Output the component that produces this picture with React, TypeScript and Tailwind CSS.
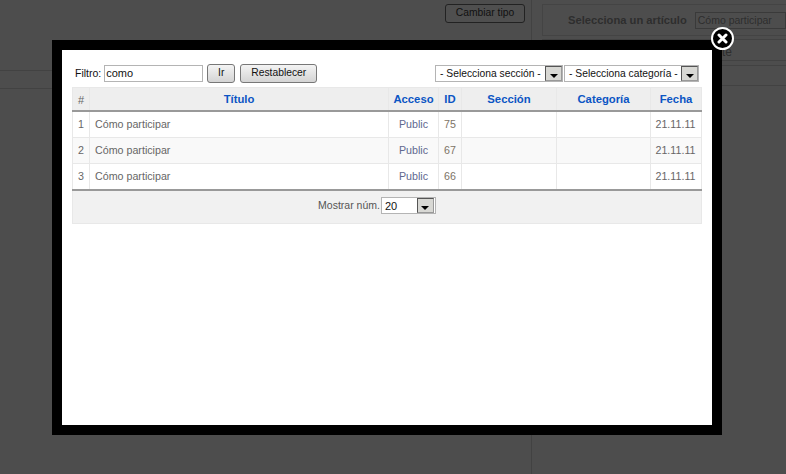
import React from 'react';

const rows = [
  { n: 1, id: 75 },
  { n: 2, id: 67 },
  { n: 3, id: 66 },
];

const SelectArrow = () => (
  <span className="flex h-[15px] w-[17px] flex-none items-center justify-center border border-[#555] border-b-[#999] border-r-[#999] bg-[#d8d8d4]">
    <svg width="8" height="4" viewBox="0 0 8 4" className="mt-[4px]">
      <path d="M0 0h8L4 4z" fill="#000" />
    </svg>
  </span>
);

const Select = ({ label, className }: { label: string; className: string }) => (
  <div className={`flex h-[17px] flex-none items-center justify-between border border-[#b4b4b4] bg-white text-[10.3px] text-[#111] ${className}`}>
    <span className="whitespace-nowrap">{label}</span>
    <SelectArrow />
  </div>
);

const Button = ({ label, className }: { label: string; className: string }) => (
  <button className={`h-[19px] rounded-[3px] border border-[#777] bg-gradient-to-b from-[#f4f4f4] to-[#d4d4d4] text-[10.3px] leading-none text-[#111] ${className}`}>
    {label}
  </button>
);

const Th = ({ label, className = '' }: { label: string; className?: string }) => (
  <th className={`border border-b-2 border-[#e8e8e8] border-b-[#999] bg-[#eeeeee] p-0 pt-[2px] text-center text-[11.3px] font-bold text-[#0b55c4] ${className}`}>
    {label}
  </th>
);

export default function App() {
  return (
    <div className="relative h-[474px] w-[786px] overflow-hidden bg-[#4d4d4d] font-['Liberation_Sans',Arial,sans-serif]">
      {/* Page behind the overlay */}
      <div className="flex h-full">
        <div className="w-[532px] flex-none border-r border-[#424242]">
          <div className="flex h-[71px] items-start justify-end border-b border-[#424242] pr-[6px] pt-[4px]">
            <button className="h-[19px] w-[80px] rounded-[3px] border border-[#222] bg-[#4f4f4f] text-[10.3px] leading-none text-[#111]">
              Cambiar tipo
            </button>
          </div>
          <div className="h-[18px] border-b border-[#424242]" />
        </div>
        <div className="flex-1 pl-[10px]">
          <div className="mt-[4px] flex h-[32px] items-center border border-r-0 border-[#444] pl-[25px]">
            <span className="whitespace-nowrap text-[11.2px] font-bold text-[#2e2e2e]">Selecciona un artículo</span>
            <div className="ml-[8px] h-[17px] flex-1 border border-[#3a3a3a] pl-[2px] text-[10.5px] leading-[15px] text-[#2e2e2e]">
              Cómo participar
            </div>
          </div>
          <div className="mt-[3px] h-[22px] border-b border-t border-[#424242] pl-[180px] text-[12px] leading-[24px] text-[#2e2e2e]">
            te
          </div>
          <div className="mt-[4px] h-[21px] border-y border-[#424242]" />
        </div>
      </div>

      {/* Modal */}
      <div className="absolute left-[52px] top-[40px] h-[395px] w-[670px] border-[10px] border-black bg-white px-[10px] pt-[14px]">
        <div className="flex h-[23px] items-start justify-between pl-[3px] pr-[3px]">
          <div className="flex items-center text-[10.5px] text-[#111]">
            <span>Filtro:</span>
            <div className="ml-[3px] h-[17px] w-[99px] border border-[#b4b4b4] pl-[1px] text-[11px] leading-[15px]">como</div>
            <Button label="Ir" className="ml-[4px] w-[28px]" />
            <Button label="Restablecer" className="ml-[5px] w-[77px]" />
          </div>
          <div className="mt-[1px] flex">
            <Select label="- Selecciona sección -" className="w-[128px] pl-[4px]" />
            <Select label="- Selecciona categoría -" className="ml-[1px] w-[135px] pl-[4px]" />
          </div>
        </div>

        <table className="w-[629px] table-fixed border-collapse">
          <colgroup>
            <col className="w-[17px]" />
            <col className="w-[299px]" />
            <col className="w-[50px]" />
            <col className="w-[23px]" />
            <col className="w-[95px]" />
            <col className="w-[94px]" />
            <col className="w-[51px]" />
          </colgroup>
          <thead>
            <tr className="h-[23px]">
              <th className="border border-b-2 border-[#e8e8e8] border-b-[#999] bg-[#eeeeee] p-0 pt-[2px] text-center text-[11px] font-normal text-[#666]">#</th>
              <Th label="Título" />
              <Th label="Acceso" />
              <Th label="ID" />
              <Th label="Sección" />
              <Th label="Categoría" />
              <Th label="Fecha" />
            </tr>
          </thead>
          <tbody>
            {rows.map((r) => (
              <tr key={r.n} className={`text-[10.7px] text-[#666] ${r.n === 2 ? 'bg-[#f9f9f9]' : 'bg-white'} ${r.n === 1 ? 'h-[27px]' : 'h-[26px]'}`}>
                <td className="border border-[#e8e8e8] p-0 text-center">{r.n}</td>
                <td className="border border-[#e8e8e8] py-0 pl-[5px] pr-0">Cómo participar</td>
                <td className="border border-[#e8e8e8] p-0 text-center text-[#60688f]">Public</td>
                <td className="border border-[#e8e8e8] p-0 text-center text-[#7d7466]">{r.id}</td>
                <td className="border border-[#e8e8e8] p-0" />
                <td className="border border-[#e8e8e8] p-0" />
                <td className="border border-[#e8e8e8] p-0 pr-[1px] text-center">21.11.11</td>
              </tr>
            ))}
          </tbody>
          <tfoot>
            <tr className="h-[34px] bg-[#f1f1f1]">
              <td colSpan={7} className="border border-t-2 border-[#e8e8e8] border-t-[#999] p-0">
                <div className="flex items-center justify-center pb-[2px] pr-[20px] text-[10.5px] text-[#555]">
                  <span>Mostrar núm.</span>
                  <Select label="20" className="ml-[1px] w-[55px] pl-[3px] pr-[1px] text-[11px]" />
                </div>
              </td>
            </tr>
          </tfoot>
        </table>
      </div>

      {/* Close button */}
      <div className="absolute left-[711px] top-[27px] flex h-[23px] w-[23px] items-center justify-center rounded-full border-[2px] border-white bg-black">
        <svg width="11" height="11" viewBox="0 0 11 11">
          <path d="M2 2l7 7M9 2l-7 7" stroke="#fff" strokeWidth="3" strokeLinecap="round" />
        </svg>
      </div>
    </div>
  );
}
